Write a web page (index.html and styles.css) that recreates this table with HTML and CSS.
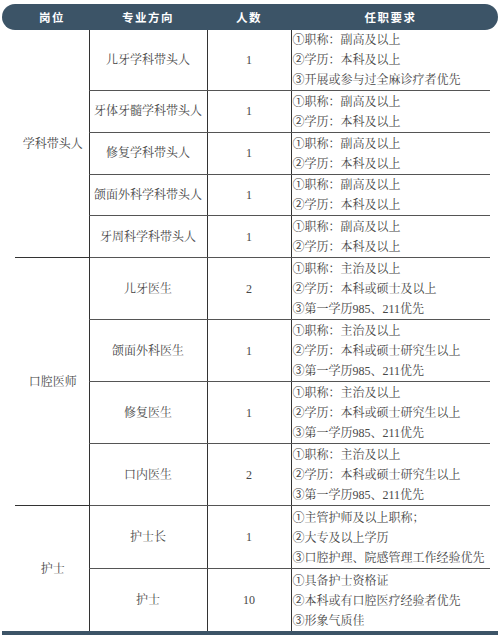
FILE: index.html
```html
<!DOCTYPE html>
<html lang="zh-CN">
<head>
<meta charset="utf-8">
<link rel="stylesheet" href="styles.css">
</head>
<body>
<div class="page">
  <div class="header">
    <div class="hcell">岗位</div>
    <div class="hcell">专业方向</div>
    <div class="hcell">人数</div>
    <div class="hcell">任职要求</div>
  </div>
  <table class="grid">
    <colgroup><col class="c1"><col class="c2"><col class="c3"><col class="c4"></colgroup>
    <tbody class="group g1">
      <tr class="r3 first">
        <td class="pos" rowspan="5">学科带头人</td>
        <td class="dir">儿牙学科带头人</td>
        <td class="num">1</td>
        <td class="req"><span class="mk">①</span>职称：副高及以上<br><span class="mk">②</span>学历：本科及以上<br><span class="mk">③</span>开展或参与过全麻诊疗者优先</td>
      </tr>
      <tr class="r2">
        <td class="dir">牙体牙髓学科带头人</td>
        <td class="num">1</td>
        <td class="req"><span class="mk">①</span>职称：副高及以上<br><span class="mk">②</span>学历：本科及以上</td>
      </tr>
      <tr class="r2">
        <td class="dir">修复学科带头人</td>
        <td class="num">1</td>
        <td class="req"><span class="mk">①</span>职称：副高及以上<br><span class="mk">②</span>学历：本科及以上</td>
      </tr>
      <tr class="r2">
        <td class="dir">颌面外科学科带头人</td>
        <td class="num">1</td>
        <td class="req"><span class="mk">①</span>职称：副高及以上<br><span class="mk">②</span>学历：本科及以上</td>
      </tr>
      <tr class="r2 last">
        <td class="dir">牙周科学科带头人</td>
        <td class="num">1</td>
        <td class="req"><span class="mk">①</span>职称：副高及以上<br><span class="mk">②</span>学历：本科及以上</td>
      </tr>
    </tbody>
    <tbody class="group g2">
      <tr class="r3">
        <td class="pos" rowspan="4">口腔医师</td>
        <td class="dir">儿牙医生</td>
        <td class="num">2</td>
        <td class="req"><span class="mk">①</span>职称：主治及以上<br><span class="mk">②</span>学历：本科或硕士及以上<br><span class="mk">③</span>第一学历985、211优先</td>
      </tr>
      <tr class="r3">
        <td class="dir">颌面外科医生</td>
        <td class="num">1</td>
        <td class="req"><span class="mk">①</span>职称：主治及以上<br><span class="mk">②</span>学历：本科或硕士研究生以上<br><span class="mk">③</span>第一学历985、211优先</td>
      </tr>
      <tr class="r3">
        <td class="dir">修复医生</td>
        <td class="num">1</td>
        <td class="req"><span class="mk">①</span>职称：主治及以上<br><span class="mk">②</span>学历：本科或硕士研究生以上<br><span class="mk">③</span>第一学历985、211优先</td>
      </tr>
      <tr class="r3 last">
        <td class="dir">口内医生</td>
        <td class="num">2</td>
        <td class="req"><span class="mk">①</span>职称：主治及以上<br><span class="mk">②</span>学历：本科或硕士研究生以上<br><span class="mk">③</span>第一学历985、211优先</td>
      </tr>
    </tbody>
    <tbody class="group g3">
      <tr class="r3">
        <td class="pos" rowspan="2">护士</td>
        <td class="dir">护士长</td>
        <td class="num">1</td>
        <td class="req"><span class="mk">①</span>主管护师及以上职称；<br><span class="mk">②</span>大专及以上学历<br><span class="mk">③</span>口腔护理、院感管理工作经验优先</td>
      </tr>
      <tr class="r3 last">
        <td class="dir">护士</td>
        <td class="num">10</td>
        <td class="req"><span class="mk">①</span>具备护士资格证<br><span class="mk">②</span>本科或有口腔医疗经验者优先<br><span class="mk">③</span>形象气质佳</td>
      </tr>
    </tbody>
  </table>
  <div class="bottom-bar"></div>
</div>
</body>
</html>
```

FILE: styles.css
```css
html, body {
  margin: 0;
  padding: 0;
  background: #ffffff;
}

.page {
  width: 500px;
  padding-top: 4px;
}

.header {
  margin: 0 2px;
  height: 26px;
  border-radius: 13px;
  background: #3c5467;
  display: grid;
  grid-template-columns: 74px 118px 84px 199px;
  padding: 0 8px 0 13px;
  align-items: center;
}

.hcell {
  color: #ffffff;
  font-family: "Noto Sans CJK SC", "Noto Sans", sans-serif;
  font-weight: 700;
  font-size: 11.5px;
  letter-spacing: 1.5px;
  text-align: center;
  line-height: 26px;
}

.grid {
  margin-left: 15px;
  width: 475px;
  border-collapse: collapse;
  table-layout: fixed;
  font-family: "Liberation Serif", "Noto Serif CJK SC", "Noto Sans CJK SC", serif;
  font-size: 12px;
  color: #474747;
}

.c1 { width: 74px; }
.c2 { width: 118px; }
.c3 { width: 84px; }
.c4 { width: 199px; }

.grid td {
  padding: 0;
  line-height: 20px;
  vertical-align: middle;
}

.grid td.pos {
  text-align: center;
  border-bottom: 1px solid #333333;
  padding-left: 2px;
}

.grid .g3 td.pos {
  border-bottom: none;
}

.grid td.dir,
.grid td.num,
.grid td.req {
  border-left: 1px solid #333333;
  border-bottom: 1px solid #555555;
}

.grid td.dir,
.grid td.num {
  text-align: center;
}

.grid td.req {
  text-align: left;
  padding-left: 1px;
  white-space: nowrap;
}

.mk {
  font-family: "Noto Sans CJK SC", sans-serif;
  font-size: 12px;
  line-height: 12px;
}

.grid .g1 tr.r2 td.req {
  padding-top: 0.75px;
}

.grid .g2 td.req {
  padding-top: 1px;
}

.grid .g3 td.req {
  padding-top: 2px;
}

.grid .g3 tr.last td {
  border-bottom: none;
}

.bottom-bar {
  margin: 0 2px;
  height: 4px;
  background: #3c5467;
}
```
